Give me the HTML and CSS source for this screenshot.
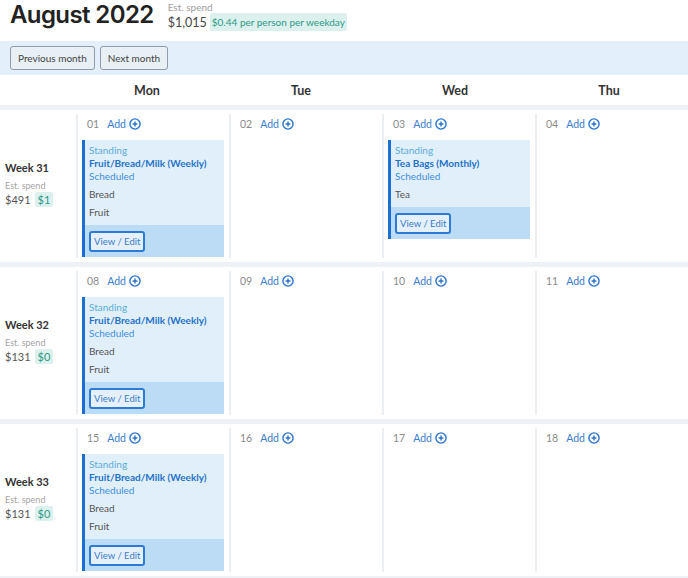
FILE: index.html
```html
<!DOCTYPE html>
<html>
<head>
<meta charset="utf-8">
<link rel="stylesheet" href="styles.css">
</head>
<body>
<div class="page">
  <header class="top">
    <h1 class="title">August 2022</h1>
    <div class="spend">
      <div class="est">Est. spend</div>
      <div class="amt-row"><span class="amt">$1,015</span><span class="badge">$0.44 per person per weekday</span></div>
    </div>
  </header>
  <div class="toolbar">
    <button class="btn">Previous month</button>
    <button class="btn">Next month</button>
  </div>
  <div class="days">
    <div></div>
    <div class="dayname">Mon</div>
    <div class="dayname">Tue</div>
    <div class="dayname">Wed</div>
    <div class="dayname">Thu</div>
    <div></div>
  </div>

  <div class="week">
    <div class="wlabel">
      <div class="wname">Week 31</div>
      <div class="west">Est. spend</div>
      <div class="wamt-row"><span class="wamt">$491</span><span class="wbadge">$1</span></div>
    </div>
    <div class="day">
      <div class="dhead"><span class="num">01</span><span class="add">Add</span><svg class="plus" viewBox="0 0 12 12"><circle cx="6" cy="6" r="5.1"/><path d="M6 3.6v4.8M3.6 6h4.8"/></svg></div>
      <div class="card">
        <div class="card-body">
          <div class="kind">Standing</div>
          <div class="cname">Fruit/Bread/Milk (Weekly)</div>
          <div class="status">Scheduled</div>
          <div class="items"><div>Bread</div><div>Fruit</div></div>
        </div>
        <div class="card-foot"><button class="edit">View / Edit</button></div>
      </div>
    </div>
    <div class="day">
      <div class="dhead"><span class="num">02</span><span class="add">Add</span><svg class="plus" viewBox="0 0 12 12"><circle cx="6" cy="6" r="5.1"/><path d="M6 3.6v4.8M3.6 6h4.8"/></svg></div>
    </div>
    <div class="day">
      <div class="dhead"><span class="num">03</span><span class="add">Add</span><svg class="plus" viewBox="0 0 12 12"><circle cx="6" cy="6" r="5.1"/><path d="M6 3.6v4.8M3.6 6h4.8"/></svg></div>
      <div class="card">
        <div class="card-body">
          <div class="kind">Standing</div>
          <div class="cname">Tea Bags (Monthly)</div>
          <div class="status">Scheduled</div>
          <div class="items"><div>Tea</div></div>
        </div>
        <div class="card-foot"><button class="edit">View / Edit</button></div>
      </div>
    </div>
    <div class="day">
      <div class="dhead"><span class="num">04</span><span class="add">Add</span><svg class="plus" viewBox="0 0 12 12"><circle cx="6" cy="6" r="5.1"/><path d="M6 3.6v4.8M3.6 6h4.8"/></svg></div>
    </div>
    <div class="day"></div>
  </div>

  <div class="week">
    <div class="wlabel">
      <div class="wname">Week 32</div>
      <div class="west">Est. spend</div>
      <div class="wamt-row"><span class="wamt">$131</span><span class="wbadge">$0</span></div>
    </div>
    <div class="day">
      <div class="dhead"><span class="num">08</span><span class="add">Add</span><svg class="plus" viewBox="0 0 12 12"><circle cx="6" cy="6" r="5.1"/><path d="M6 3.6v4.8M3.6 6h4.8"/></svg></div>
      <div class="card">
        <div class="card-body">
          <div class="kind">Standing</div>
          <div class="cname">Fruit/Bread/Milk (Weekly)</div>
          <div class="status">Scheduled</div>
          <div class="items"><div>Bread</div><div>Fruit</div></div>
        </div>
        <div class="card-foot"><button class="edit">View / Edit</button></div>
      </div>
    </div>
    <div class="day">
      <div class="dhead"><span class="num">09</span><span class="add">Add</span><svg class="plus" viewBox="0 0 12 12"><circle cx="6" cy="6" r="5.1"/><path d="M6 3.6v4.8M3.6 6h4.8"/></svg></div>
    </div>
    <div class="day">
      <div class="dhead"><span class="num">10</span><span class="add">Add</span><svg class="plus" viewBox="0 0 12 12"><circle cx="6" cy="6" r="5.1"/><path d="M6 3.6v4.8M3.6 6h4.8"/></svg></div>
    </div>
    <div class="day">
      <div class="dhead"><span class="num">11</span><span class="add">Add</span><svg class="plus" viewBox="0 0 12 12"><circle cx="6" cy="6" r="5.1"/><path d="M6 3.6v4.8M3.6 6h4.8"/></svg></div>
    </div>
    <div class="day"></div>
  </div>

  <div class="week">
    <div class="wlabel">
      <div class="wname">Week 33</div>
      <div class="west">Est. spend</div>
      <div class="wamt-row"><span class="wamt">$131</span><span class="wbadge">$0</span></div>
    </div>
    <div class="day">
      <div class="dhead"><span class="num">15</span><span class="add">Add</span><svg class="plus" viewBox="0 0 12 12"><circle cx="6" cy="6" r="5.1"/><path d="M6 3.6v4.8M3.6 6h4.8"/></svg></div>
      <div class="card">
        <div class="card-body">
          <div class="kind">Standing</div>
          <div class="cname">Fruit/Bread/Milk (Weekly)</div>
          <div class="status">Scheduled</div>
          <div class="items"><div>Bread</div><div>Fruit</div></div>
        </div>
        <div class="card-foot"><button class="edit">View / Edit</button></div>
      </div>
    </div>
    <div class="day">
      <div class="dhead"><span class="num">16</span><span class="add">Add</span><svg class="plus" viewBox="0 0 12 12"><circle cx="6" cy="6" r="5.1"/><path d="M6 3.6v4.8M3.6 6h4.8"/></svg></div>
    </div>
    <div class="day">
      <div class="dhead"><span class="num">17</span><span class="add">Add</span><svg class="plus" viewBox="0 0 12 12"><circle cx="6" cy="6" r="5.1"/><path d="M6 3.6v4.8M3.6 6h4.8"/></svg></div>
    </div>
    <div class="day">
      <div class="dhead"><span class="num">18</span><span class="add">Add</span><svg class="plus" viewBox="0 0 12 12"><circle cx="6" cy="6" r="5.1"/><path d="M6 3.6v4.8M3.6 6h4.8"/></svg></div>
    </div>
    <div class="day"></div>
  </div>
</div>
</body>
</html>
```

FILE: styles.css
```css
html, body {
  margin: 0;
  padding: 0;
  background: #ffffff;
}
body {
  font-family: Lato, "Open Sans", sans-serif;
  color: #444;
  overflow: hidden;
  width: 688px;
  height: 578px;
}
.page {
  width: 688px;
  overflow: hidden;
}
.top {
  display: flex;
  align-items: flex-start;
  height: 41px;
  padding-left: 10px;
  box-sizing: border-box;
}
.title {
  margin: 0;
  font-family: Inter, "Noto Sans", sans-serif;
  font-weight: 600;
  font-size: 24px;
  line-height: 30px;
  color: #222;
  letter-spacing: -0.6px;
}
.spend {
  margin-left: 14px;
  padding-top: 1px;
}
.est {
  font-size: 10px;
  line-height: 12px;
  color: #a0a0a0;
}
.amt-row {
  display: flex;
  align-items: center;
}
.amt {
  font-size: 12.5px;
  color: #444;
}
.badge {
  margin-left: 3px;
  background: #dcf1ee;
  color: #2e9a85;
  font-size: 10px;
  line-height: 18px;
  padding: 0 2px;
  border-radius: 2px;
}
.toolbar {
  display: flex;
  gap: 5px;
  background: #e3f0fb;
  height: 34px;
  padding: 5px 10px;
  box-sizing: border-box;
}
.btn {
  font-family: Lato, sans-serif;
  font-size: 10px;
  color: #444;
  background: #e8eff5;
  border: 1px solid #8e9ba8;
  border-radius: 3px;
  height: 24px;
  padding: 0 7px;
}
.days {
  display: grid;
  grid-template-columns: 70px repeat(5, 154px);
  height: 30px;
  align-items: center;
  border-bottom: 5px solid #eef2f6;
}
.dayname {
  text-align: center;
  font-weight: 700;
  font-size: 12.5px;
  color: #333;
}
.week {
  display: grid;
  grid-template-columns: 76px repeat(5, 153px);
  border-bottom: 5px solid #eef2f6;
}
.wlabel {
  align-self: center;
  padding-left: 5px;
  padding-bottom: 4px;
}
.wname {
  font-weight: 700;
  font-size: 11px;
  color: #333;
  line-height: 14px;
  margin-bottom: 5px;
}
.west {
  font-size: 9px;
  color: #a3a3a3;
  line-height: 12px;
}
.wamt-row {
  display: flex;
  align-items: center;
  gap: 4px;
}
.wamt {
  font-size: 11px;
  color: #555;
}
.wbadge {
  background: #dcf1ee;
  color: #2e9a85;
  font-size: 11px;
  line-height: 15px;
  padding: 0 3px;
  border-radius: 2px;
}
.day {
  margin: 4px 0;
  border-left: 2px solid #eceff2;
  padding: 0 5px 1px 4px;
  min-height: 143px;
}
.dhead {
  display: flex;
  align-items: center;
  height: 26px;
  padding: 3px 0 9px 5px;
  box-sizing: border-box;
  font-size: 10.5px;
}
.num {
  color: #8a8a8a;
  margin-right: 8px;
}
.add {
  color: #3a7cce;
}
.plus {
  width: 12px;
  height: 12px;
  margin-left: 3px;
  fill: none;
  stroke: #2a73cc;
  stroke-width: 1.4;
}
.card {
  border-left: 3px solid #1a6fd0;
  background: #e1effb;
  font-size: 10px;
}
.card-body {
  padding: 4px 6px 4px 4px;
}
.kind {
  color: #5aaed8;
  line-height: 13px;
}
.cname {
  color: #2372c8;
  font-weight: 700;
  line-height: 13px;
}
.status {
  color: #3f8fdc;
  line-height: 13px;
}
.items {
  color: #555;
  line-height: 18px;
  margin-top: 2px;
}
.card-foot {
  background: #bcdcf6;
  padding: 6px 4px 5px;
}
.edit {
  font-family: Lato, sans-serif;
  font-size: 9.5px;
  color: #3a7bc8;
  background: #e4f1fc;
  border: 2px solid #2d7bd4;
  border-radius: 3px;
  height: 21px;
  padding: 0 3px;
}
```
